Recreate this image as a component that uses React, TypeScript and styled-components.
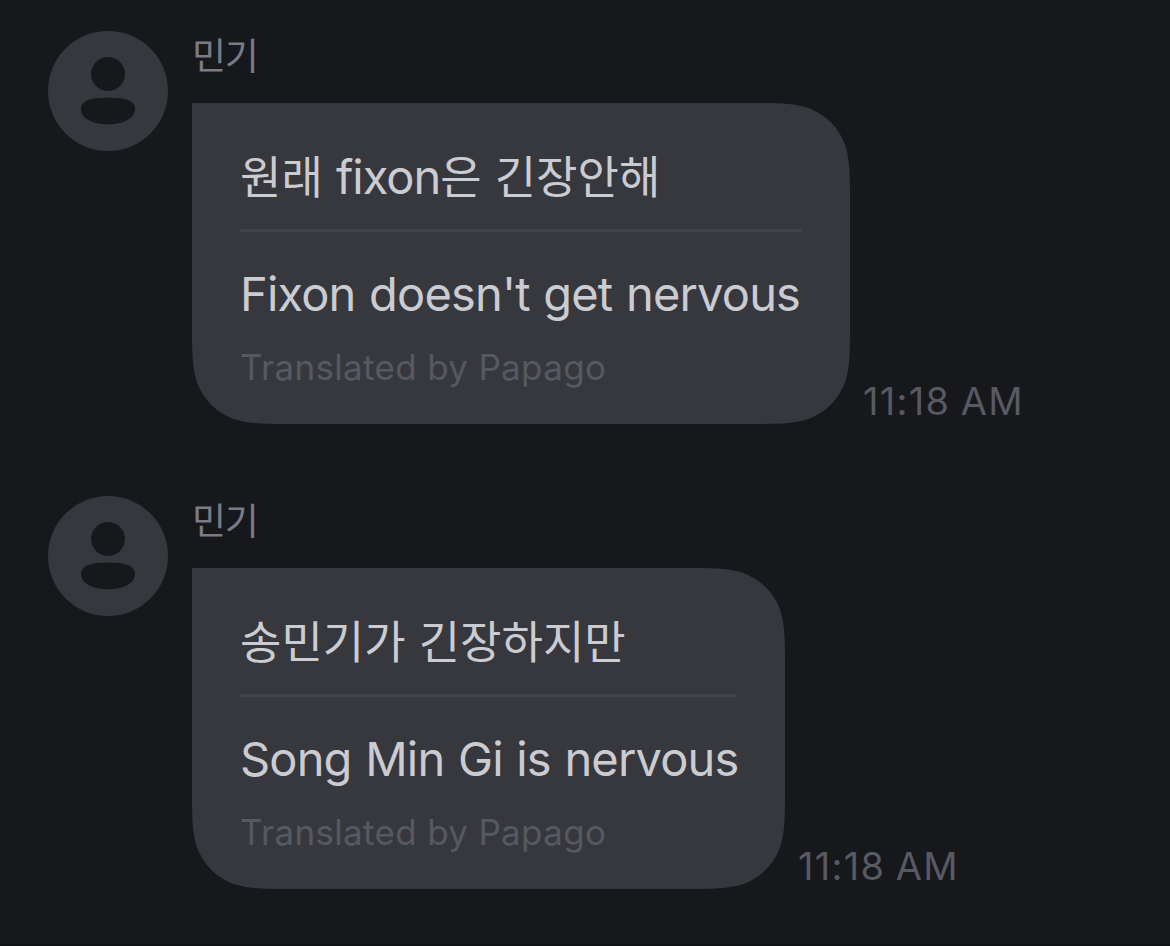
import React from "react";
import styled, { createGlobalStyle } from "styled-components";

const GlobalStyle = createGlobalStyle`
  * { box-sizing: border-box; }
  body {
    margin: 0;
    background: #17181c;
    font-family: Inter, "Noto Sans CJK KR", sans-serif;
  }
`;

const Screen = styled.main`
  display: flex;
  flex-direction: column;
  gap: 72px;
  height: 946px;
  padding: 31px 48px 0;
  overflow: hidden;
  border-bottom: 2px solid #111215;
`;

const MessageRow = styled.article`
  display: flex;
  align-items: flex-start;
  gap: 24px;
  height: 393px;
`;

const Avatar = styled.svg`
  display: block;
  flex: none;
  width: 120px;
  height: 120px;
`;

const Body = styled.div`
  display: flex;
  flex-direction: column;
`;

const Sender = styled.div`
  height: 72px;
  font-family: "Noto Sans CJK KR", sans-serif;
  font-size: 37px;
  font-weight: 400;
  line-height: 46px;
  letter-spacing: -1.2px;
  color: #7a7b84;
  white-space: nowrap;
`;

const BubbleLine = styled.div`
  display: flex;
  align-items: flex-end;
  gap: 13px;
`;

const BUBBLE_HEIGHT = 321;
const RADIUS = 66;

// Continuous-curvature corners on every side but the top left one.
const bubblePath = (w: number) => {
  const h = BUBBLE_HEIGHT;
  const [a, b, c, d, e, f, g] = [
    1.52866, 1.08849, 0.86841, 0.63149, 0.37282, 0.16906, 0.07491,
  ].map((k) => k * RADIUS);
  return [
    `M0 0 H${w - a}`,
    `C${w - b} 0 ${w - c} 0 ${w - d} ${g}`,
    `C${w - e} ${f} ${w - f} ${e} ${w - g} ${d}`,
    `C${w} ${c} ${w} ${b} ${w} ${a}`,
    `V${h - a}`,
    `C${w} ${h - b} ${w} ${h - c} ${w - g} ${h - d}`,
    `C${w - f} ${h - e} ${w - e} ${h - f} ${w - d} ${h - g}`,
    `C${w - c} ${h} ${w - b} ${h} ${w - a} ${h}`,
    `H${a}`,
    `C${b} ${h} ${c} ${h} ${d} ${h - g}`,
    `C${e} ${h - f} ${f} ${h - e} ${g} ${h - d}`,
    `C0 ${h - c} 0 ${h - b} 0 ${h - a} Z`,
  ].join(" ");
};

const Bubble = styled.div<{ $width: number }>`
  display: flex;
  flex-direction: column;
  width: ${(p) => p.$width}px;
  height: ${BUBBLE_HEIGHT}px;
  padding: 42px 48px 0;
  background: #37383d;
  clip-path: path("${(p) => bubblePath(p.$width)}");
  white-space: nowrap;
`;

const Original = styled.p`
  height: 87px;
  margin: 0;
  border-bottom: 3px solid #41424b;
  font-size: 47px;
  line-height: 60px;
  letter-spacing: -1px;
  color: #cbccd2;
`;

const Hangul = styled.span`
  font-family: "Noto Sans CJK KR", sans-serif;
  font-size: 45px;
  letter-spacing: 0;
  word-spacing: 3px;
`;

const Translation = styled.p`
  margin: 33px 0 0;
  font-size: 47px;
  line-height: 58px;
  letter-spacing: -0.83px;
  word-spacing: 1.2px;
  color: #cbccd2;
`;

const Credit = styled.p`
  margin: 20px 0 0;
  font-size: 35px;
  line-height: 48px;
  letter-spacing: 0.33px;
  color: #565862;
`;

const Time = styled.time`
  font-size: 38px;
  font-weight: 400;
  line-height: 46px;
  letter-spacing: 1.3px;
  word-spacing: -1.5px;
  color: #585962;
  white-space: nowrap;
`;

type Part = { text: string; hangul?: boolean };

type Message = {
  original: Part[];
  translation: string;
  width: number;
};

const messages: Message[] = [
  {
    original: [
      { text: "원래 ", hangul: true },
      { text: "fixon" },
      { text: "은 긴장안해", hangul: true },
    ],
    translation: "Fixon doesn't get nervous",
    width: 658,
  },
  {
    original: [{ text: "송민기가 긴장하지만", hangul: true }],
    translation: "Song Min Gi is nervous",
    width: 593,
  },
];

const PersonAvatar = () => (
  <Avatar viewBox="0 0 120 120" aria-hidden="true">
    <circle cx="60" cy="60" r="60" fill="#37383d" />
    <circle cx="60" cy="43" r="17" fill="#17181c" />
    <path
      d="M60 66.500C68 66.500 74 67.200 78.500 68.400C84 69.900 87 73.500 87 78.500C87 86.500 77 93.300 60 93.300C43 93.300 33 86.500 33 78.500C33 73.500 36 69.900 41.500 68.400C46 67.200 52 66.500 60 66.500Z"
      fill="#17181c"
    />
  </Avatar>
);

export default function App() {
  return (
    <>
      <GlobalStyle />
      <Screen>
        {messages.map((m) => (
          <MessageRow key={m.translation}>
            <PersonAvatar />
            <Body>
              <Sender>민기</Sender>
              <BubbleLine>
                <Bubble $width={m.width}>
                  <Original>
                    {m.original.map((part) =>
                      part.hangul ? (
                        <Hangul key={part.text}>{part.text}</Hangul>
                      ) : (
                        <span key={part.text}>{part.text}</span>
                      ),
                    )}
                  </Original>
                  <Translation>{m.translation}</Translation>
                  <Credit>Translated by Papago</Credit>
                </Bubble>
                <Time>11:18 AM</Time>
              </BubbleLine>
            </Body>
          </MessageRow>
        ))}
      </Screen>
    </>
  );
}
